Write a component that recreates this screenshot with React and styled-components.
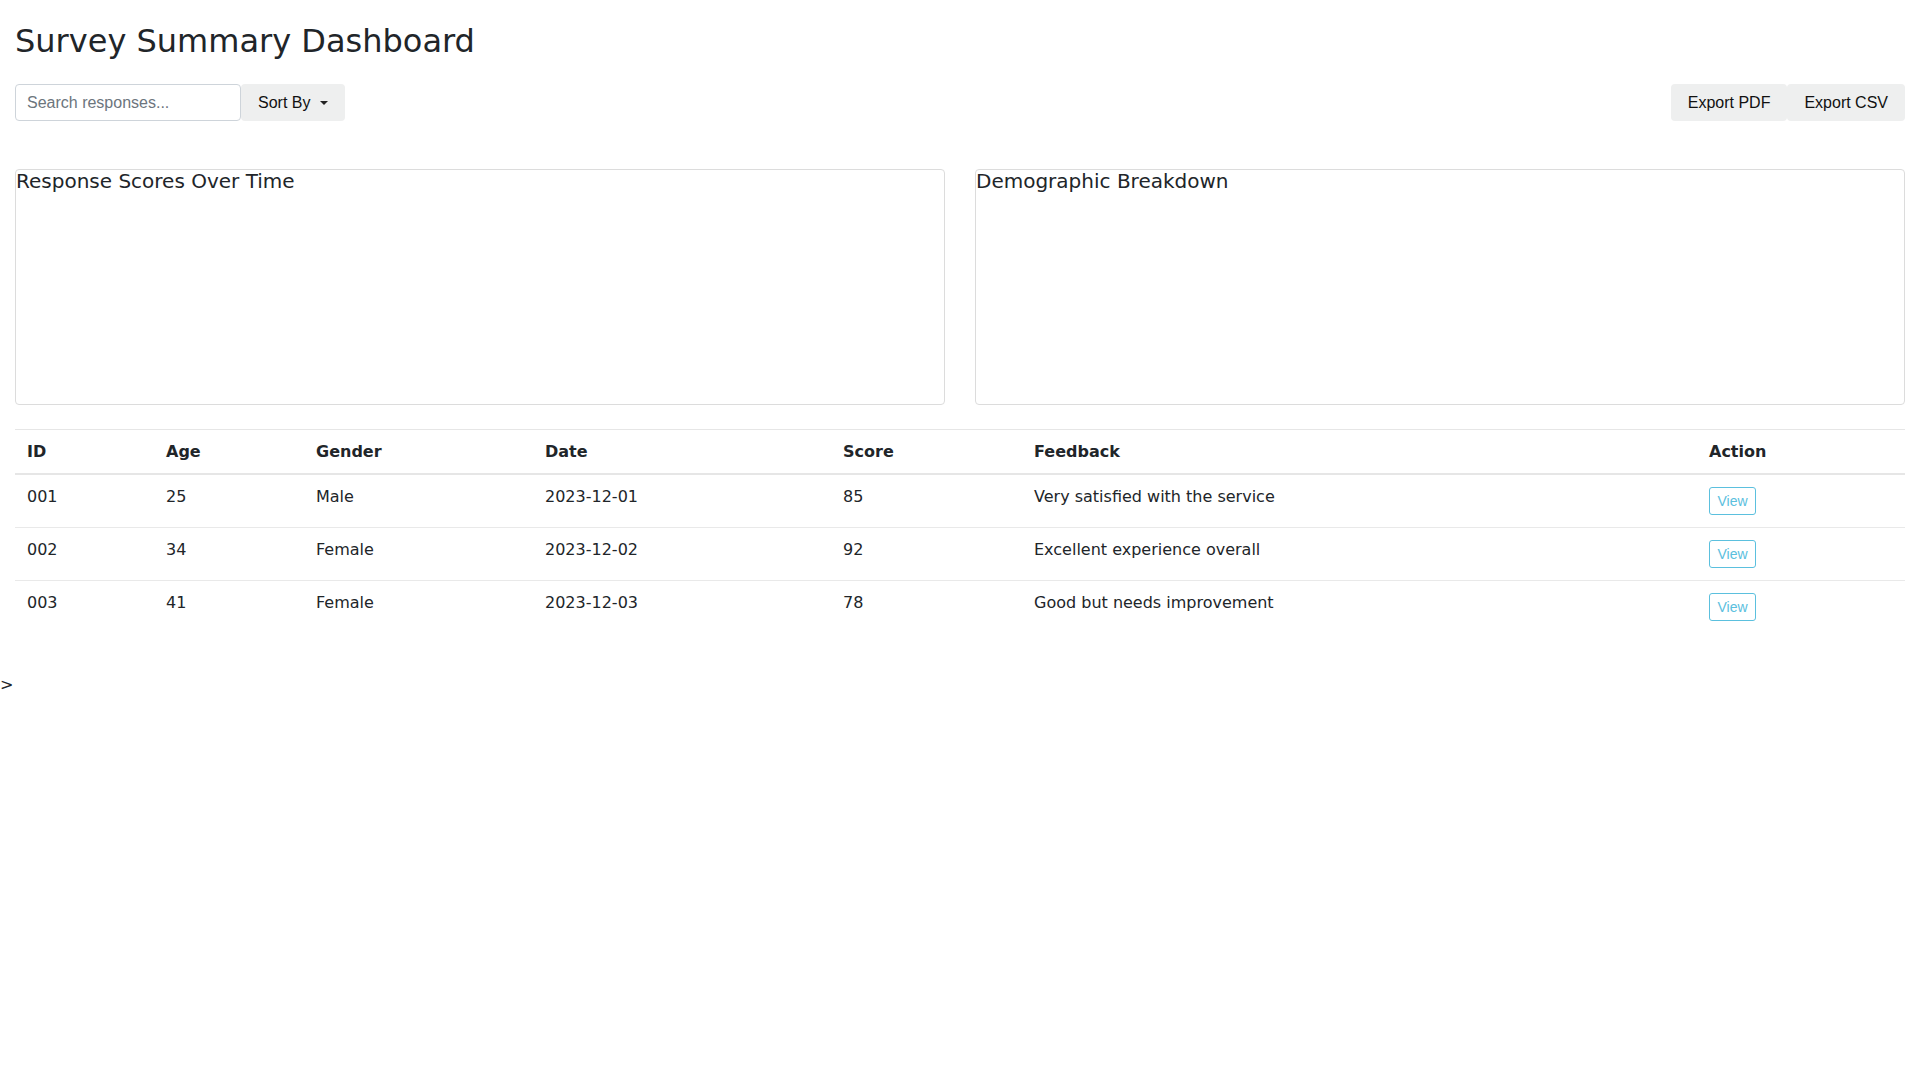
import React from 'react'
import styled, { createGlobalStyle } from 'styled-components'

const GlobalStyle = createGlobalStyle`
    body {
        margin: 0;
        font-family: "DejaVu Sans", sans-serif;
        font-size: 16px;
        color: #212529;
        background: #fff;
    }
`

const Container = styled.div`
    padding: 0 15px;
`

const Title = styled.h1`
    font-size: 32px;
    font-weight: normal;
    line-height: normal;
    margin: 22px 0 24px;
    color: #212529;
`

const Toolbar = styled.div`
    display: flex;
    justify-content: space-between;
    align-items: center;
`

const Group = styled.div`
    display: flex;
`

const SearchInput = styled.input`
    box-sizing: border-box;
    width: 226px;
    height: 37px;
    padding: 0 11px;
    border: 1px solid #ced4da;
    border-radius: 4px;
    font-family: "Liberation Sans", Arial, sans-serif;
    font-size: 16px;
    color: #212529;
    outline: none;

    &::placeholder {
        color: #6c757d;
    }
`

const GreyButton = styled.button`
    display: flex;
    align-items: center;
    height: 37px;
    padding: 0 17px;
    border: none;
    border-radius: 4px;
    background: #eeefef;
    font-family: "Liberation Sans", Arial, sans-serif;
    font-size: 16px;
    color: #111;
    cursor: pointer;
`

const Caret = styled.span`
    display: inline-block;
    margin-left: 10px;
    border-top: 4px solid #222;
    border-left: 4px solid transparent;
    border-right: 4px solid transparent;
`

const Panels = styled.div`
    display: grid;
    grid-template-columns: 1fr 1fr;
    gap: 30px;
    margin-top: 48px;
`

const Panel = styled.div`
    box-sizing: border-box;
    height: 236px;
    border: 1px solid #dcdcdc;
    border-radius: 4px;
`

const PanelTitle = styled.h3`
    margin: 0;
    font-size: 20px;
    font-weight: normal;
    line-height: 1.1;
    color: #212529;
`

const Table = styled.table`
    width: 100%;
    table-layout: fixed;
    border-collapse: separate;
    border-spacing: 0;
    margin-top: 24px;
`

const Th = styled.th`
    text-align: left;
    font-weight: bold;
    padding: 12px;
    line-height: normal;
    border-top: 1px solid #e6e6e6;
    border-bottom: 2px solid #e6e6e6;
`

const Td = styled.td`
    padding: 12px;
    line-height: normal;
    vertical-align: top;
    border-top: ${props => props.first ? 'none' : '1px solid #e9e9e9'};
`

const ViewButton = styled.button`
    display: inline-block;
    vertical-align: top;
    box-sizing: border-box;
    height: 28px;
    padding: 0 7.5px;
    border: 1px solid #5bc0de;
    border-radius: 3px;
    background: #fff;
    color: #5bc0de;
    font-family: "Liberation Sans", Arial, sans-serif;
    font-size: 14px;
    cursor: pointer;
`

const Stray = styled.div`
    margin-top: 42px;
    line-height: normal;
`

const columns = [
    { name: 'ID', width: 139 },
    { name: 'Age', width: 150 },
    { name: 'Gender', width: 229 },
    { name: 'Date', width: 298 },
    { name: 'Score', width: 191 },
    { name: 'Feedback', width: 675 },
    { name: 'Action', width: 208 },
]

const responses = [
    { id: '001', age: 25, gender: 'Male', date: '2023-12-01', score: 85, feedback: 'Very satisfied with the service' },
    { id: '002', age: 34, gender: 'Female', date: '2023-12-02', score: 92, feedback: 'Excellent experience overall' },
    { id: '003', age: 41, gender: 'Female', date: '2023-12-03', score: 78, feedback: 'Good but needs improvement' },
]

const App = () => {
    return (
        <>
            <GlobalStyle />
            <Container>
                <Title>Survey Summary Dashboard</Title>

                <Toolbar>
                    <Group>
                        <SearchInput placeholder="Search responses..." />
                        <GreyButton>Sort By<Caret /></GreyButton>
                    </Group>
                    <Group>
                        <GreyButton>Export PDF</GreyButton>
                        <GreyButton>Export CSV</GreyButton>
                    </Group>
                </Toolbar>

                <Panels>
                    <Panel>
                        <PanelTitle>Response Scores Over Time</PanelTitle>
                    </Panel>
                    <Panel>
                        <PanelTitle>Demographic Breakdown</PanelTitle>
                    </Panel>
                </Panels>

                <Table>
                    <colgroup>
                        {columns.map(c => <col key={c.name} style={{ width: c.width }} />)}
                    </colgroup>
                    <thead>
                        <tr>
                            {columns.map(c => <Th key={c.name}>{c.name}</Th>)}
                        </tr>
                    </thead>
                    <tbody>
                        {responses.map((r, i) => (
                            <tr key={r.id}>
                                <Td first={i === 0}>{r.id}</Td>
                                <Td first={i === 0}>{r.age}</Td>
                                <Td first={i === 0}>{r.gender}</Td>
                                <Td first={i === 0}>{r.date}</Td>
                                <Td first={i === 0}>{r.score}</Td>
                                <Td first={i === 0}>{r.feedback}</Td>
                                <Td first={i === 0}><ViewButton>View</ViewButton></Td>
                            </tr>
                        ))}
                    </tbody>
                </Table>
            </Container>
            <Stray>&gt;</Stray>
        </>
    )
}

export default App
